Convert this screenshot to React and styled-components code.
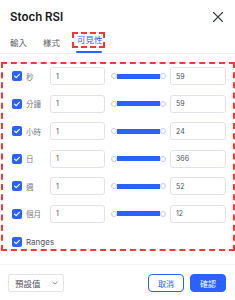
import React from "react";
import styled, { createGlobalStyle } from "styled-components";

const Global = createGlobalStyle`
  html, body { margin: 0; padding: 0; background: #fff; }
  body { width: 235px; height: 300px; overflow: hidden; font-family: Inter, "Noto Sans CJK TC", sans-serif; color: #131722; }
  * { box-sizing: border-box; }
`;

const Dialog = styled.div`
  width: 235px;
  height: 300px;
  display: flex;
  flex-direction: column;
  background: #fff;
`;

const Header = styled.div`
  height: 32px;
  display: flex;
  align-items: center;
  justify-content: space-between;
  padding: 0 10px 0 10px;
`;

const Title = styled.div`
  font-size: 11.5px;
  font-weight: 600;
  color: #131722;
  padding-top: 1px;
`;

const Close = styled.div`
  width: 12px;
  height: 12px;
  display: flex;
  margin-top: 2px;
  margin-right: 1px;
`;

const TabBar = styled.div`
  height: 22px;
  display: flex;
  align-items: flex-start;
  padding-left: 10px;
  border-bottom: 1px solid #eef0f4;
`;

const Tab = styled.div`
  font-size: 8.5px;
  line-height: 16px;
  margin-top: 3px;
  margin-right: ${(p) => p.$mr}px;
  color: #5d606b;
`;

const ActiveTab = styled.div`
  display: flex;
  flex-direction: column;
  align-items: flex-start;
`;

const ActiveLabel = styled.div`
  border: 2px dashed #f03a3a;
  padding: 0 0 0 3px;
  width: 33px;
  font-size: 8.5px;
  line-height: 12px;
  color: #2962ff;
`;

const Underline = styled.div`
  width: 26px;
  height: 2px;
  margin: 3px 0 0 4px;
  background: #2962ff;
  border-radius: 1px;
`;

const Body = styled.div`
  flex: 1;
  padding: 8px 0 0 1px;
`;

const Annot = styled.div`
  width: 234px;
  border: 2px dashed #f03a3a;
  padding: 3px 0 1px 9px;
  display: flex;
  flex-direction: column;
  gap: 9.6px;
`;

const Row = styled.div`
  height: 18px;
  display: flex;
  align-items: center;
`;

const RangesRow = styled.div`
  height: 12px;
  display: flex;
  align-items: center;
  margin-top: 3.4px;
`;

const LabelCell = styled.div`
  width: 38px;
  display: flex;
  align-items: center;
  gap: 4px;
`;

const Check = styled.div`
  width: 10px;
  height: 10px;
  border-radius: 2px;
  background: #2962ff;
  display: flex;
  align-items: center;
  justify-content: center;
  flex-shrink: 0;
`;

const Label = styled.span`
  font-size: 7.5px;
  color: #787b86;
  white-space: nowrap;
`;

const RangesLabel = styled.span`
  font-size: 8px;
  color: #50535e;
`;

const Input = styled.div`
  width: ${(p) => p.$w}px;
  height: 18px;
  border: 1px solid #e0e3eb;
  border-radius: 3px;
  padding-left: 5px;
  display: flex;
  align-items: center;
  font-size: 7px;
  color: #50535e;
  background: #fff;
`;

const Slider = styled.div`
  width: 55px;
  margin: 0 4px 0 6px;
  height: 7px;
  display: flex;
  align-items: center;
`;

const Thumb = styled.div`
  width: 6px;
  height: 6px;
  border-radius: 50%;
  background: #fff;
  border: 1px solid #c9ccd6;
  flex-shrink: 0;
`;

const Track = styled.div`
  flex: 1;
  height: 5px;
  background: #2962ff;
`;

const Footer = styled.div`
  border-top: 1px solid #f0f3fa;
  height: 36px;
  padding: 9px 9px 0 8px;
  display: flex;
  align-items: flex-start;
  gap: 6px;
`;

const Select = styled.div`
  width: 56px;
  height: 18px;
  border: 1px solid #e0e3eb;
  border-radius: 3px;
  display: flex;
  align-items: center;
  justify-content: space-between;
  padding: 0 5px 0 6px;
  font-size: 8.5px;
  color: #50535e;
  margin-right: auto;
`;

const Button = styled.div`
  width: 36px;
  height: 18px;
  border-radius: 4px;
  border: 1px solid #2962ff;
  background: ${(p) => (p.$primary ? "#2962ff" : "#fff")};
  color: ${(p) => (p.$primary ? "#fff" : "#2962ff")};
  font-size: 8px;
  display: flex;
  align-items: center;
  justify-content: center;
`;

const CheckMark = () => (
  <svg width="8" height="8" viewBox="0 0 8 8">
    <path d="M1.6 4.1 L3.2 5.7 L6.4 2.4" fill="none" stroke="#fff" strokeWidth="1.2" strokeLinecap="round" strokeLinejoin="round" />
  </svg>
);

const rows = [
  ["秒", "59"],
  ["分鐘", "59"],
  ["小時", "24"],
  ["日", "366"],
  ["週", "52"],
  ["個月", "12"],
];

export default function App() {
  return (
    <>
      <Global />
      <Dialog>
        <Header>
          <Title>Stoch RSI</Title>
          <Close>
            <svg width="12" height="12" viewBox="0 0 12 12">
              <path d="M1.5 1.5 L10.5 10.5 M10.5 1.5 L1.5 10.5" stroke="#3b3e48" strokeWidth="1.1" strokeLinecap="round" />
            </svg>
          </Close>
        </Header>
        <TabBar>
          <Tab $mr={16}>輸入</Tab>
          <Tab $mr={12}>樣式</Tab>
          <ActiveTab>
            <ActiveLabel>可見性</ActiveLabel>
            <Underline />
          </ActiveTab>
        </TabBar>
        <Body>
          <Annot>
            {rows.map(([label, max]) => (
              <Row key={label}>
                <LabelCell>
                  <Check>
                    <CheckMark />
                  </Check>
                  <Label>{label}</Label>
                </LabelCell>
                <Input $w={55}>1</Input>
                <Slider>
                  <Thumb />
                  <Track />
                  <Thumb />
                </Slider>
                <Input $w={56}>{max}</Input>
              </Row>
            ))}
            <RangesRow>
              <LabelCell>
                <Check>
                  <CheckMark />
                </Check>
                <RangesLabel>Ranges</RangesLabel>
              </LabelCell>
            </RangesRow>
          </Annot>
        </Body>
        <Footer>
          <Select>
            <span>預設值</span>
            <svg width="6" height="4" viewBox="0 0 6 4">
              <path d="M0.5 0.8 L3 3.2 L5.5 0.8" fill="none" stroke="#787b86" strokeWidth="0.9" />
            </svg>
          </Select>
          <Button>取消</Button>
          <Button $primary>確認</Button>
        </Footer>
      </Dialog>
    </>
  );
}
